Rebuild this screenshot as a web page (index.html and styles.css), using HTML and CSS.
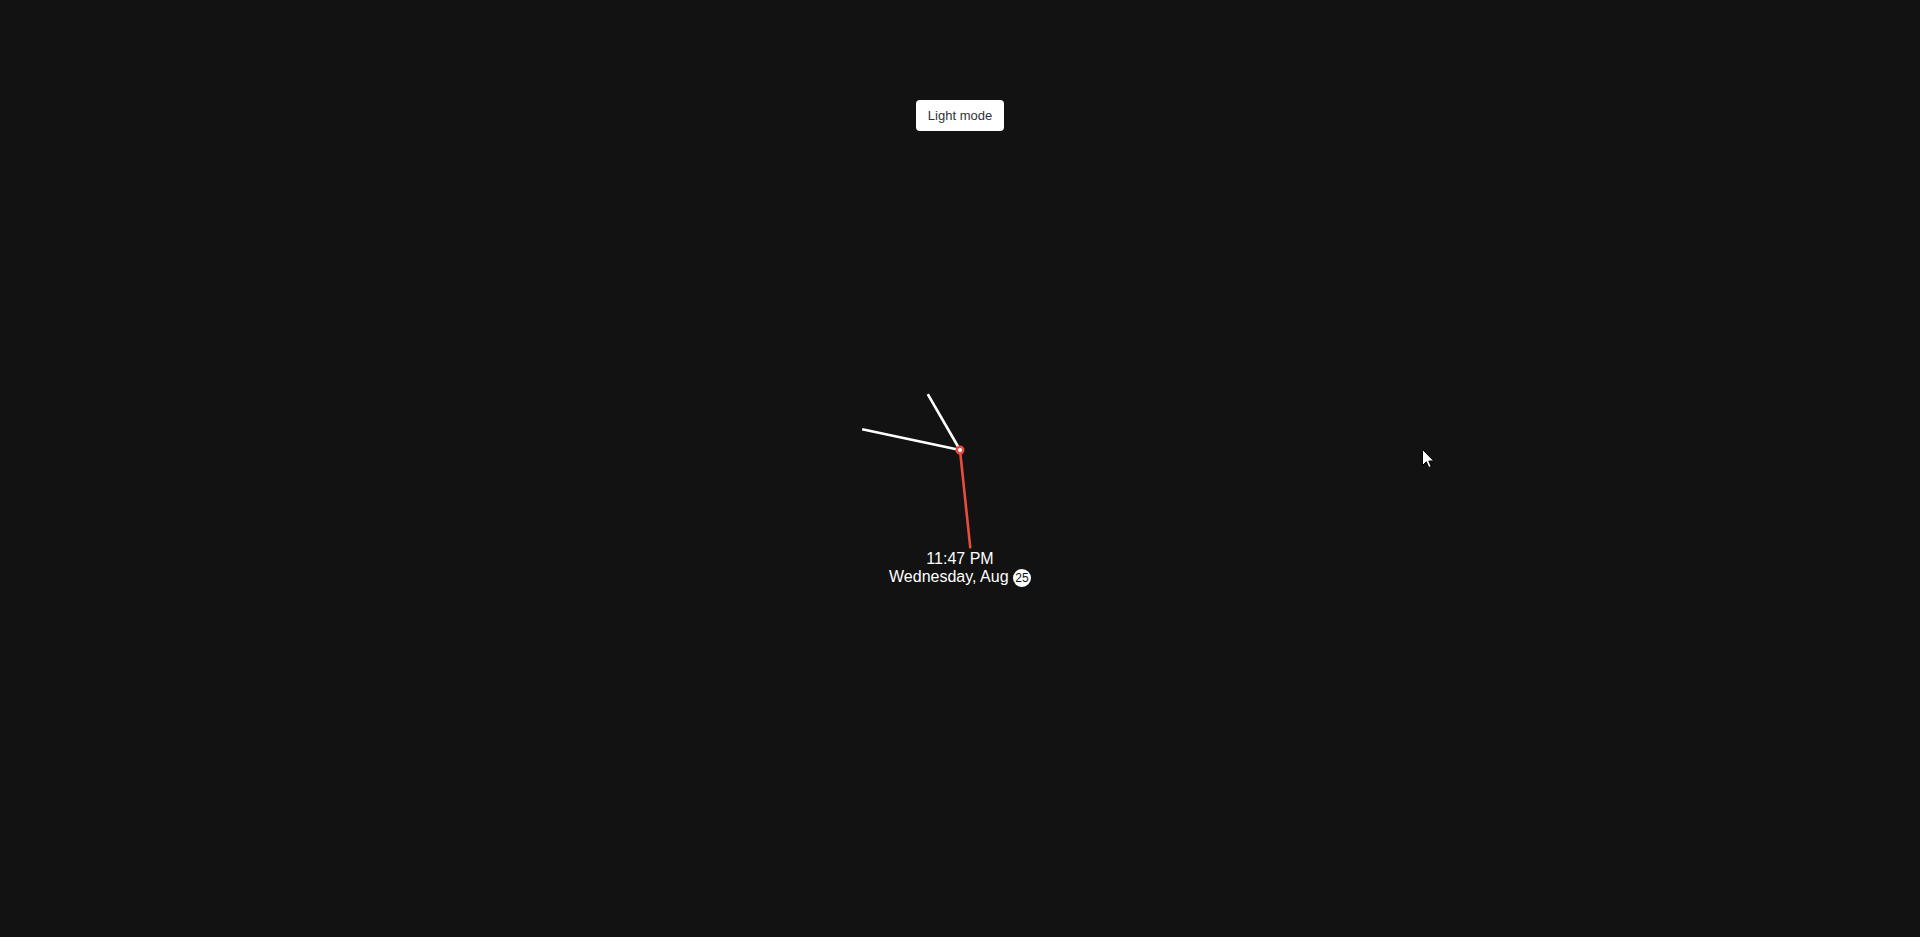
FILE: index.html
```html
<!DOCTYPE html>
<html lang="en">
<head>
<meta charset="utf-8">
<title>Clock</title>
<link rel="stylesheet" href="styles.css">
</head>
<body>
<main class="page">
  <button class="mode-btn" type="button">Light mode</button>
  <section class="clock">
    <svg class="clock-face" width="200" height="200" viewBox="-100 -100 200 200">
      <line class="hand" x1="0" y1="0" x2="0" y2="-64.5" transform="rotate(330)"/>
      <line class="hand" x1="0" y1="0" x2="0" y2="-100" transform="rotate(282)"/>
      <line class="hand second" x1="0" y1="0" x2="0" y2="-99" transform="rotate(174)"/>
      <circle class="pin-outer" cx="0" cy="0" r="4.5"/>
      <circle class="pin-inner" cx="0" cy="0" r="2"/>
    </svg>
    <div class="caption">
      <div class="time">11:47 PM</div>
      <div class="date">Wednesday, Aug <span class="day">25</span></div>
    </div>
  </section>
</main>
<svg class="cursor" width="13" height="20" viewBox="0 0 13 20">
  <path d="M0.5 0.5 L0.5 16.5 L4.3 12.8 L6.8 18.6 L9.2 17.6 L6.8 12 L11.8 12 Z" fill="#fff" stroke="#000" stroke-width="1"/>
</svg>
</body>
</html>
```
FILE: styles.css
```css
html, body {
  margin: 0;
  padding: 0;
  background: #121212;
  height: 100%;
  overflow: hidden;
}

body {
  font-family: "Liberation Sans", Arial, sans-serif;
  color: #fff;
}

.page {
  display: flex;
  flex-direction: column;
  align-items: center;
  padding-top: 100px;
}

.mode-btn {
  height: 31px;
  padding: 0 12px;
  border: none;
  border-radius: 4px;
  background: #fff;
  color: #2f3338;
  font-family: "Liberation Sans", Arial, sans-serif;
  font-size: 13px;
  line-height: 31px;
  cursor: pointer;
}

.clock {
  margin-top: 219px;
  display: flex;
  flex-direction: column;
  align-items: center;
}

.clock-face {
  display: block;
  overflow: visible;
}

.hand {
  stroke: #fff;
  stroke-width: 2.6;
}

.hand.second {
  stroke: #e74c3c;
}

.pin-outer {
  fill: #e74c3c;
}

.pin-inner {
  fill: #fff;
}

.caption {
  text-align: center;
  font-size: 16px;
  line-height: 18px;
}

.day {
  display: inline-block;
  width: 18px;
  height: 18px;
  border-radius: 50%;
  background: #fff;
  color: #121212;
  font-size: 12px;
  line-height: 18px;
  text-align: center;
  vertical-align: baseline;
}

.cursor {
  position: absolute;
  left: 1422px;
  top: 449px;
}
```
